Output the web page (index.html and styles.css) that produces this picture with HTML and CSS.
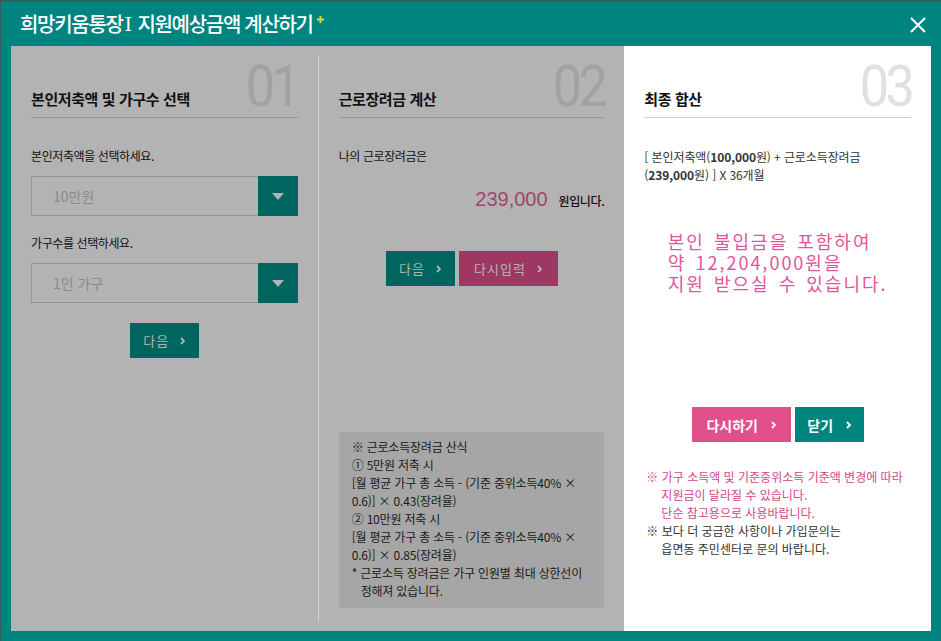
FILE: index.html
```html
<!DOCTYPE html>
<html lang="ko">
<head>
    <meta charset="UTF-8">
    <meta name="viewport" content="width=device-width, initial-scale=1.0">
    <title>희망키움통장Ⅰ 지원예상금액 계산하기</title>
    <link rel="stylesheet" href="styles.css">
</head>
<body>
    <div class="modal">
        <div class="modal-head">
            <h1 class="modal-title">희망키움통장<span class="roman">Ⅰ</span> 지원예상금액 계산하기<svg class="plus" width="7" height="7" viewBox="0 0 7 7"><path d="M3.5 0v7M0 3.5h7" stroke="#cfd84a" stroke-width="2"/></svg></h1>
            <button class="close" type="button"><svg width="16" height="16" viewBox="0 0 16 16"><path d="M1 1l14 14M15 1L1 15" stroke="#fff" stroke-width="2"/></svg></button>
        </div>

        <div class="steps">
            <!-- 01 -->
            <section class="step dim">
                <div class="step-inner">
                    <div class="step-head">
                        <h2>본인저축액 및 가구수 선택</h2>
                        <span class="step-no">01</span>
                    </div>
                    <p class="label first">본인저축액을 선택하세요.</p>
                    <div class="select">
                        <span>10만원</span>
                        <span class="arrow"><svg width="12" height="7" viewBox="0 0 12 7"><path d="M0 0h12L6 7z" fill="#b3b3b3"/></svg></span>
                    </div>
                    <p class="label">가구수를 선택하세요.</p>
                    <div class="select">
                        <span>1인 가구</span>
                        <span class="arrow"><svg width="12" height="7" viewBox="0 0 12 7"><path d="M0 0h12L6 7z" fill="#b3b3b3"/></svg></span>
                    </div>
                    <div class="btns btns-s1">
                        <a class="btn btn-teal w69">다음<svg class="chev" width="5" height="8" viewBox="0 0 5 8"><path d="M1 1l3 3-3 3" fill="none" stroke="currentColor" stroke-width="1.8"/></svg></a>
                    </div>
                </div>
            </section>

            <!-- 02 -->
            <section class="step dim">
                <div class="step-inner divided">
                    <div class="step-head">
                        <h2>근로장려금 계산</h2>
                        <span class="step-no">02</span>
                    </div>
                    <p class="label first">나의 근로장려금은</p>
                    <div class="amount"><strong>239,000</strong><span>원입니다.</span></div>
                    <div class="btns btns-s2">
                        <a class="btn btn-teal w69">다음<svg class="chev" width="5" height="8" viewBox="0 0 5 8"><path d="M1 1l3 3-3 3" fill="none" stroke="currentColor" stroke-width="1.8"/></svg></a>
                        <a class="btn btn-pink w99">다시입력<svg class="chev" width="5" height="8" viewBox="0 0 5 8"><path d="M1 1l3 3-3 3" fill="none" stroke="currentColor" stroke-width="1.8"/></svg></a>
                    </div>
                    <div class="formula">
                        ※ 근로소득장려금 산식<br>
                        ① 5만원 저축 시<br>
                        [월 평균 가구 총 소득 - (기준 중위소득40% ×<br>
                        0.6)] × 0.43(장려율)<br>
                        ② 10만원 저축 시<br>
                        [월 평균 가구 총 소득 - (기준 중위소득40% ×<br>
                        0.6)] × 0.85(장려율)<br>
                        * 근로소득 장려금은 가구 인원별 최대 상한선이<br>
                        <span class="indent">정해져 있습니다.</span>
                    </div>
                </div>
            </section>

            <!-- 03 -->
            <section class="step">
                <div class="step-inner">
                    <div class="step-head">
                        <h2>최종 합산</h2>
                        <span class="step-no">03</span>
                    </div>
                    <p class="sum">[ 본인저축액(<b>100,000</b>원) + 근로소득장려금<br>(<b>239,000</b>원) ] X 36개월</p>
                    <p class="result">본인 불입금을 포함하여<br>약 12,204,000원을<br>지원 받으실 수 있습니다.</p>
                    <div class="btns btns-s3">
                        <a class="btn btn-pink w99">다시하기<svg class="chev" width="5" height="8" viewBox="0 0 5 8"><path d="M1 1l3 3-3 3" fill="none" stroke="currentColor" stroke-width="1.8"/></svg></a>
                        <a class="btn btn-teal w69">닫기<svg class="chev" width="5" height="8" viewBox="0 0 5 8"><path d="M1 1l3 3-3 3" fill="none" stroke="currentColor" stroke-width="1.8"/></svg></a>
                    </div>
                    <p class="note pink">※ 가구 소득액 및 기준중위소득 기준액 변경에 따라<br>지원금이 달라질 수 있습니다.<br>단순 참고용으로 사용바랍니다.</p>
                    <p class="note">※ 보다 더 궁금한 사항이나 가입문의는<br>읍면동 주민센터로 문의 바랍니다.</p>
                </div>
            </section>
        </div>
    </div>
</body>
</html>
```

FILE: styles.css
```css
* {
    box-sizing: border-box;
    margin: 0;
    padding: 0;
}
body {
    background: #345f5e;
    font-family: "Noto Sans CJK KR", "Noto Sans", sans-serif;
    color: #222;
    overflow: hidden;
}
.modal {
    margin: 2px 0 0 1px;
    height: 639px;
    padding: 0 10px 10px;
    background: #008480;
    display: flex;
    flex-direction: column;
}
.modal-head {
    height: 44px;
    display: flex;
    align-items: center;
    justify-content: space-between;
    padding: 0 5px 0 9px;
}
.modal-title {
    color: #fff;
    font-size: 20px;
    font-weight: 500;
    letter-spacing: -1.3px;
    line-height: 28px;
    display: flex;
    align-items: flex-start;
    white-space: pre;
}
.modal-title .roman {
    font-family: "DejaVu Serif", "Liberation Serif", serif;
    font-weight: 400;
    font-size: 19px;
    letter-spacing: 0;
    margin: 0 1px 0 2px;
}
.plus {
    margin: 6px 0 0 4px;
}
.close {
    background: none;
    border: none;
    width: 16px;
    height: 16px;
    margin-top: 2px;
}

.steps {
    flex: 1;
    display: flex;
}
.step {
    flex: 1;
    padding: 10px 0;
    background: #fff;
}
.step.dim {
    background: #b3b3b3;
}
.step-inner {
    height: 100%;
    padding: 0 20px;
    display: flex;
    flex-direction: column;
}
.step-inner.divided {
    border-left: 1px solid #d4d4d4;
}
.step-head {
    display: flex;
    justify-content: space-between;
    align-items: flex-end;
    padding: 9px 0 10px;
    border-bottom: 1px solid #ccc;
}
.dim .step-head {
    border-bottom-color: #959595;
}
.step-head h2 {
    font-size: 15px;
    font-weight: 700;
    letter-spacing: -0.4px;
    line-height: 20px;
    color: #111;
    margin-bottom: -2px;
}
.step-no {
    font-family: Roboto, sans-serif;
    font-weight: 400;
    font-size: 58px;
    line-height: 42px;
    letter-spacing: -4px;
    color: #e0e0e0;
    transform: scaleX(0.9);
    transform-origin: right;
}
.dim .step-no {
    color: #a2a2a2;
}

.label {
    font-size: 12px;
    line-height: 18px;
    letter-spacing: -0.4px;
    color: #111;
    margin: 18px 0 11px;
}
.label.first {
    margin-top: 29px;
}
.select {
    height: 40px;
    border: 1px solid #959595;
    display: flex;
    align-items: center;
    justify-content: space-between;
    padding-left: 21px;
    font-size: 14px;
    color: #8a8a8a;
}
.select .arrow {
    width: 40px;
    height: 40px;
    margin: -1px -1px -1px 0;
    background: #00645f;
    display: flex;
    align-items: center;
    justify-content: center;
}

.btns {
    display: flex;
    justify-content: center;
    gap: 4px;
}
.btns-s1 {
    margin-top: 20px;
}
.btns-s2 {
    margin-top: 38px;
}
.btns-s3 {
    margin-top: 113px;
}
.btn {
    height: 35px;
    display: flex;
    align-items: center;
    justify-content: center;
    font-size: 13px;
    letter-spacing: 1px;
    color: #fff;
    cursor: pointer;
}
.btn .chev {
    margin-left: 11px;
}
.w69 {
    width: 69px;
}
.w99 {
    width: 99px;
}
.btn-teal {
    background: #00857f;
}
.btn-pink {
    background: #e2508c;
}
.btns-s3 .btn {
    font-size: 14px;
    font-weight: 700;
    letter-spacing: 0;
}
.btns-s3 .chev {
    margin-left: 13px;
}
.dim .btn {
    color: #b3b3b3;
}
.dim .btn-teal {
    background: #00645f;
}
.dim .btn-pink {
    background: #9e3862;
}

.amount {
    margin-top: 11px;
    display: flex;
    justify-content: flex-end;
    align-items: baseline;
    line-height: 24px;
}
.amount strong {
    font-family: "Liberation Sans", Arial, sans-serif;
    font-size: 20px;
    font-weight: 400;
    color: #a1466c;
    margin-right: 11px;
}
.amount span {
    font-size: 12px;
    font-weight: 500;
    letter-spacing: -0.4px;
    color: #111;
}
.formula {
    margin-top: auto;
    margin-bottom: 13px;
    background: #a6a6a6;
    padding: 6px 13px 8px;
    font-size: 12px;
    line-height: 18px;
    letter-spacing: -0.2px;
    color: #1a1a1a;
    white-space: nowrap;
}
.formula .indent {
    padding-left: 9px;
}

.sum {
    margin-top: 30px;
    font-size: 12px;
    line-height: 18px;
    letter-spacing: -0.1px;
    color: #333;
    white-space: nowrap;
}
.sum b {
    font-weight: 600;
}
.result {
    align-self: center;
    margin-top: 47px;
    font-size: 18px;
    line-height: 21px;
    letter-spacing: 2px;
    word-spacing: 2px;
    color: #e2559a;
}
.note {
    font-size: 12px;
    line-height: 18px;
    letter-spacing: 0;
    color: #333;
    padding-left: 17px;
    text-indent: -15px;
    white-space: nowrap;
}
.note.pink {
    margin-top: 26px;
    color: #d4468a;
}
```
